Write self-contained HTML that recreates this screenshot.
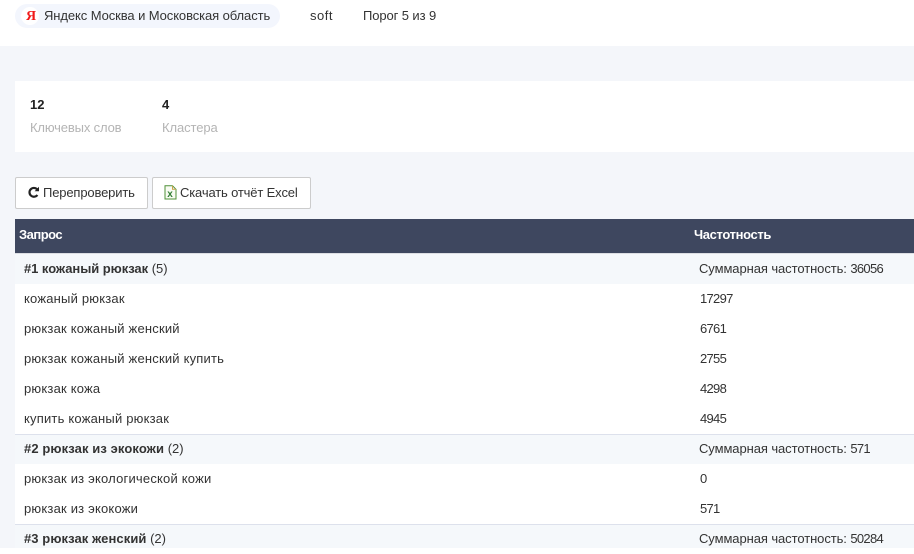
<!DOCTYPE html>
<html><head><meta charset="utf-8">
<style>
html,body{margin:0;padding:0;}
body{width:914px;height:551px;overflow:hidden;background:#fff;position:relative;font-family:"Liberation Sans",sans-serif;font-size:13px;color:#333;}
.a{position:absolute;white-space:nowrap;}
.t{position:absolute;white-space:nowrap;line-height:30px;height:30px;letter-spacing:.2px;}
.n{position:absolute;white-space:nowrap;line-height:30px;height:30px;letter-spacing:-.7px;}
.s{position:absolute;white-space:nowrap;line-height:30px;height:30px;letter-spacing:-.08px;}
.s i{font-style:normal;letter-spacing:-.7px;}
.b{font-weight:bold;letter-spacing:.03px;}
.r{position:absolute;left:15px;width:899px;}
</style></head><body>
<div class="a" style="left:0;top:46px;width:914px;height:502px;background:#f4f6fa"></div>
<div class="a" style="left:15px;top:4px;width:265px;height:24px;border-radius:12px;background:#f3f6fd"></div>
<div class="a" style="left:21px;top:7px;width:18px;height:18px;border-radius:9px;background:#fff"></div>
<div class="a" style="left:26px;top:8px;font:bold 14px/17px 'Liberation Serif',serif;color:#f01818">Я</div>
<div class="a" style="left:44px;top:7px;line-height:18px;letter-spacing:-.09px">Яндекс Москва и Московская область</div>
<div class="a" style="left:310px;top:7px;line-height:18px;letter-spacing:.5px">soft</div>
<div class="a" style="left:363px;top:7px;line-height:18px;letter-spacing:-.1px">Порог 5 из 9</div>

<div class="a" style="left:15px;top:81px;width:899px;height:71px;background:#fff"></div>
<div class="a" style="left:30px;top:97px;line-height:16px;color:#222;font-weight:bold">12</div>
<div class="a" style="left:162px;top:97px;line-height:16px;color:#222;font-weight:bold">4</div>
<div class="a" style="left:30px;top:120px;line-height:16px;color:#b4b4b4;letter-spacing:-.15px">Ключевых слов</div>
<div class="a" style="left:162px;top:120px;line-height:16px;color:#b4b4b4;letter-spacing:-.1px">Кластера</div>

<div class="a" style="left:15px;top:177px;width:131px;height:30px;background:#fff;border:1px solid #ccc;border-radius:2px"></div>
<svg class="a" style="left:27px;top:186px" width="13" height="13" viewBox="0 0 13 13"><path d="M10 3.2A4.4 4.4 0 1 0 10.4 9" fill="none" stroke="#222" stroke-width="2.2"/><path d="M7.6 5.2h4.4V0.8z" fill="#222"/></svg>
<div class="a" style="left:43px;top:184px;line-height:18px;letter-spacing:-.15px">Перепроверить</div>
<div class="a" style="left:152px;top:177px;width:157px;height:30px;background:#fff;border:1px solid #ccc;border-radius:2px"></div>
<svg class="a" style="left:164px;top:185px" width="13" height="15" viewBox="0 0 13 15"><path d="M1 .8H8.5L12 4.3V14H1z" fill="#f8fbf2" stroke="#4f9038"/><path d="M8.5 .8V4.3H12" fill="none" stroke="#c9a24a"/><text x="3.3" y="12" font-family="Liberation Sans" font-size="10" font-weight="bold" fill="#2f7d32">x</text></svg>
<div class="a" style="left:180px;top:184px;line-height:18px;letter-spacing:-.16px">Скачать отчёт Excel</div>

<div class="r" style="top:219px;height:34px;background:#3e475f"></div>
<div class="r" style="top:253px;height:1px;background:#dcdee3"></div>
<div class="a" style="left:19px;top:226px;line-height:18px;color:#fff;font-weight:bold;letter-spacing:-.5px">Запрос</div>
<div class="a" style="left:694px;top:226px;line-height:18px;color:#fff;font-weight:bold;letter-spacing:-.36px">Частотность</div>

<div class="r" style="top:254px;height:30px;background:#f5f8fb"></div>
<div class="r" style="top:284px;height:150px;background:#fff"></div>
<div class="r" style="top:434px;height:1px;background:#dde1ec"></div>
<div class="r" style="top:435px;height:29px;background:#f5f8fb"></div>
<div class="r" style="top:464px;height:60px;background:#fff"></div>
<div class="r" style="top:524px;height:1px;background:#dde1ec"></div>
<div class="r" style="top:525px;height:23px;background:#f5f8fb"></div>

<div class="t" style="left:24px;top:254px;letter-spacing:0"><span class="b" style="letter-spacing:-.05px">#1 кожаный рюкзак</span> (5)</div>
<div class="s" style="left:699px;top:254px">Суммарная частотность: <i>36056</i></div>
<div class="t" style="left:24px;top:284px">кожаный рюкзак</div><div class="n" style="left:700px;top:284px">17297</div>
<div class="t" style="left:24px;top:314px">рюкзак кожаный женский</div><div class="n" style="left:700px;top:314px">6761</div>
<div class="t" style="left:24px;top:344px">рюкзак кожаный женский купить</div><div class="n" style="left:700px;top:344px">2755</div>
<div class="t" style="left:24px;top:374px">рюкзак кожа</div><div class="n" style="left:700px;top:374px">4298</div>
<div class="t" style="left:24px;top:404px">купить кожаный рюкзак</div><div class="n" style="left:700px;top:404px">4945</div>
<div class="t" style="left:24px;top:434px;letter-spacing:0"><span class="b" style="letter-spacing:.1px">#2 рюкзак из экокожи</span> (2)</div>
<div class="s" style="left:699px;top:434px">Суммарная частотность: <i>571</i></div>
<div class="t" style="left:24px;top:464px">рюкзак из экологической кожи</div><div class="n" style="left:700px;top:464px">0</div>
<div class="t" style="left:24px;top:494px">рюкзак из экокожи</div><div class="n" style="left:700px;top:494px">571</div>
<div class="t" style="left:24px;top:524px;letter-spacing:0"><span class="b" style="letter-spacing:.08px">#3 рюкзак женский</span> (2)</div>
<div class="s" style="left:699px;top:524px">Суммарная частотность: <i>50284</i></div>
</body></html>
